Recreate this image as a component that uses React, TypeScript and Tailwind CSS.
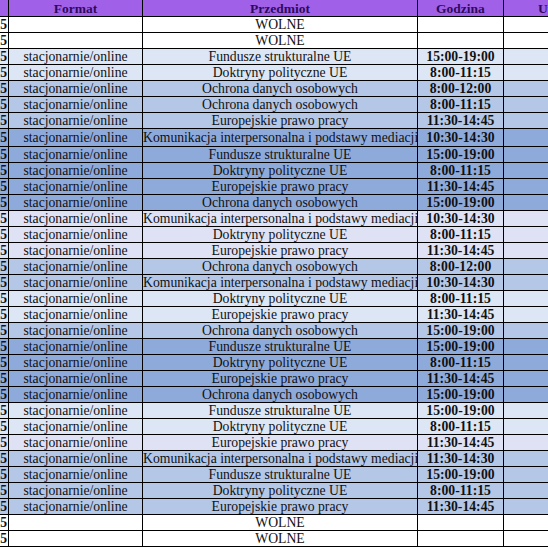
const WHITE = "bg-white";
const LIGHT = "bg-[#dce6f5]";
const LAV = "bg-[#dfe2f5]";
const MID = "bg-[#b4c7e7]";
const DARK = "bg-[#8eaadb]";

type Row = { subject: string; time: string; bg: string; free?: boolean; tall?: boolean };

const K = "Komunikacja interpersonalna i podstawy mediacji";
const F = "Fundusze strukturalne UE";
const D = "Doktryny polityczne UE";
const O = "Ochrona danych osobowych";
const E = "Europejskie prawo pracy";

const rows: Row[] = [
  { subject: "WOLNE", time: "", bg: WHITE, free: true },
  { subject: "WOLNE", time: "", bg: WHITE, free: true },
  { subject: F, time: "15:00-19:00", bg: LIGHT },
  { subject: D, time: "8:00-11:15", bg: LIGHT },
  { subject: O, time: "8:00-12:00", bg: MID },
  { subject: O, time: "8:00-11:15", bg: MID },
  { subject: E, time: "11:30-14:45", bg: MID },
  { subject: K, time: "10:30-14:30", bg: DARK, tall: true },
  { subject: F, time: "15:00-19:00", bg: DARK },
  { subject: D, time: "8:00-11:15", bg: DARK },
  { subject: E, time: "11:30-14:45", bg: DARK },
  { subject: O, time: "15:00-19:00", bg: DARK },
  { subject: K, time: "10:30-14:30", bg: LAV },
  { subject: D, time: "8:00-11:15", bg: LAV },
  { subject: E, time: "11:30-14:45", bg: LAV },
  { subject: O, time: "8:00-12:00", bg: MID },
  { subject: K, time: "10:30-14:30", bg: MID },
  { subject: D, time: "8:00-11:15", bg: LIGHT },
  { subject: E, time: "11:30-14:45", bg: LIGHT },
  { subject: O, time: "15:00-19:00", bg: MID },
  { subject: F, time: "15:00-19:00", bg: DARK },
  { subject: D, time: "8:00-11:15", bg: DARK },
  { subject: E, time: "11:30-14:45", bg: DARK },
  { subject: O, time: "15:00-19:00", bg: DARK },
  { subject: F, time: "15:00-19:00", bg: LIGHT },
  { subject: D, time: "8:00-11:15", bg: LIGHT },
  { subject: E, time: "11:30-14:45", bg: LAV },
  { subject: K, time: "11:30-14:30", bg: MID },
  { subject: F, time: "15:00-19:00", bg: MID },
  { subject: D, time: "8:00-11:15", bg: MID },
  { subject: E, time: "11:30-14:45", bg: MID },
  { subject: "WOLNE", time: "", bg: WHITE, free: true },
  { subject: "WOLNE", time: "", bg: WHITE, free: true },
];

const cell = "border border-black p-0 text-center whitespace-nowrap overflow-hidden";

export default function App() {
  return (
    <div className="w-[548px] h-[548px] overflow-hidden bg-white font-['Liberation_Serif','Times_New_Roman',serif]">
      <table className="table-fixed border-collapse w-[660px] -ml-px -mt-px text-[13.7px] leading-[15px] text-[#111]">
        <colgroup>
          <col className="w-[9px]" />
          <col className="w-[134px]" />
          <col className="w-[275px]" />
          <col className="w-[86px]" />
          <col className="w-[156px]" />
        </colgroup>
        <thead>
          <tr className="h-[17px] bg-[#a160e8] text-[#2e0a5e] font-bold text-[13.5px]">
            <th className={cell}></th>
            <th className={cell}>Format</th>
            <th className={cell}>Przedmiot</th>
            <th className={cell}>Godzina</th>
            <th className={`${cell} text-left pl-[34px]`}>Uwagi</th>
          </tr>
        </thead>
        <tbody>
          {rows.map((r, i) => (
            <tr key={i} className={`${r.tall ? "h-[18px]" : "h-[16px]"} ${r.bg}`}>
              <td className={`${cell} font-bold`}>
                <div className="flex justify-end overflow-hidden w-[7px]">
                  <span>2025</span>
                </div>
              </td>
              <td className={cell}>{r.free ? "" : "stacjonarnie/online"}</td>
              <td className={cell}>{r.subject}</td>
              <td className={`${cell} font-bold`}>{r.time}</td>
              <td className={cell}></td>
            </tr>
          ))}
        </tbody>
      </table>
    </div>
  );
}
